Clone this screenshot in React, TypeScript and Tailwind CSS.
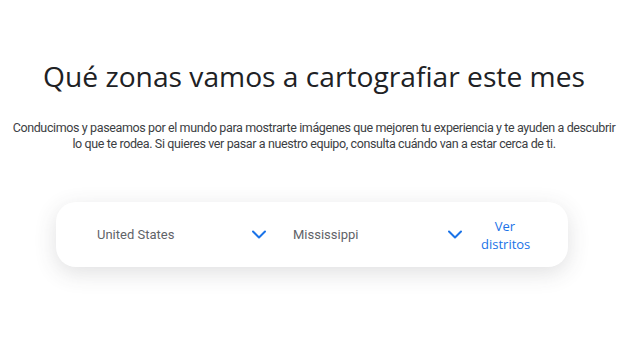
import { useState } from "react";

function Chevron() {
  return (
    <svg width="14" height="9" viewBox="0 0 14 9" fill="none" className="shrink-0">
      <path d="M1 1.5 7 7.5 13 1.5" stroke="#1a73e8" strokeWidth="2" strokeLinecap="round" strokeLinejoin="round" />
    </svg>
  );
}

function Select({ value }: { value: string }) {
  return (
    <button className="flex w-[169px] items-center justify-between text-left">
      <span className="font-['Roboto',sans-serif] text-[13px] text-[#5f6368]">{value}</span>
      <Chevron />
    </button>
  );
}

export default function App() {
  const [country] = useState("United States");
  const [region] = useState("Mississippi");

  return (
    <div className="h-[356px] w-[628px] bg-white font-['Open_Sans',sans-serif]">
      <h1 className="pt-[56px] text-center text-[28.2px] leading-[40px] text-[#202124]">
        Qué zonas vamos a cartografiar este mes
      </h1>
      <p className="mt-[24px] whitespace-nowrap text-center font-['Roboto',sans-serif] text-[12.5px] leading-[16px] tracking-[-0.38px] text-[#3c4043]">
        Conducimos y paseamos por el mundo para mostrarte imágenes que mejoren tu experiencia y te ayuden a descubrir
        <br />
        lo que te rodea. Si quieres ver pasar a nuestro equipo, consulta cuándo van a estar cerca de ti.
      </p>
      <div className="ml-[56px] mt-[50px] flex h-[65px] w-[512px] items-center rounded-[20px] bg-white pl-[41px] shadow-[0_6px_22px_rgba(60,64,67,0.16)]">
        <Select value={country} />
        <div className="w-[27px]" />
        <Select value={region} />
        <button className="ml-[19px] w-[48px] text-center text-[13px] font-medium leading-[18px] text-[#1a73e8]">
          Ver distritos
        </button>
      </div>
    </div>
  );
}
